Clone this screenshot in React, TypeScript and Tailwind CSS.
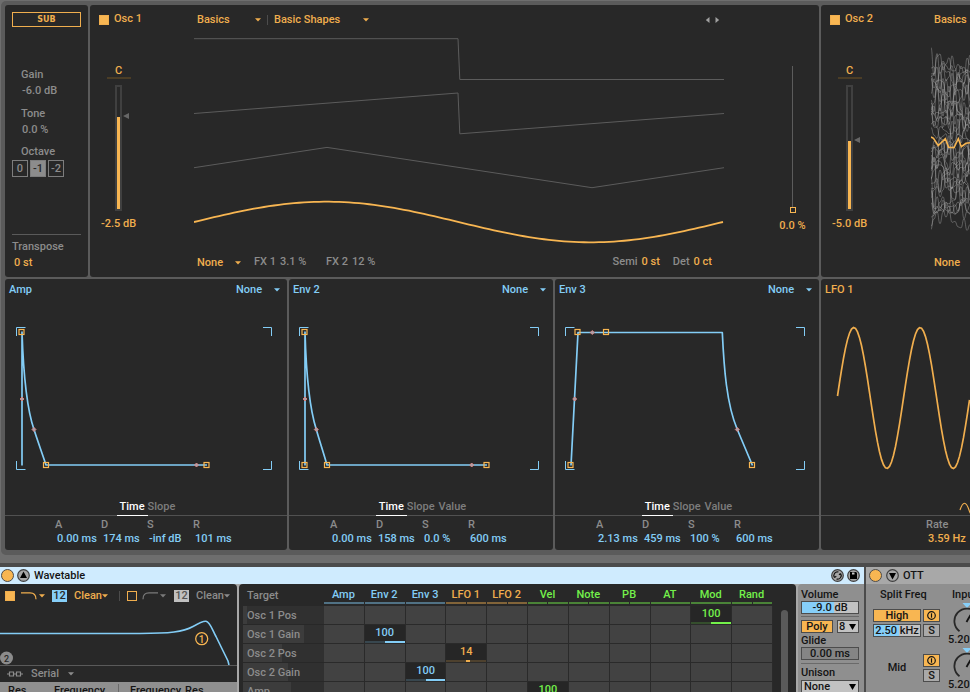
import { useState } from "react";
import type { ReactNode } from "react";
import clsx from "clsx";

type Tone = "amber" | "blue" | "gray" | "green" | "black";

const textTone: Record<Tone, string> = {
  amber: "text-[#f0ae4e]",
  blue: "text-[#83cdf6]",
  gray: "text-[#8c8c8c]",
  green: "text-[#74f14b]",
  black: "text-[#141414]",
};

function Caret({ className }: { className?: string }) {
  return (
    <svg viewBox="0 0 6 4" className={clsx("h-1 w-1.5 shrink-0 fill-current", className)}>
      <path d="M0 .3h6L3 3.6z" />
    </svg>
  );
}

type PickProps = {
  label: string;
  options: string[];
  tone: Tone;
  className?: string;
};

function Pick({ label, options, tone, className }: PickProps) {
  return (
    <div className={clsx("relative flex items-center", textTone[tone], className)}>
      <select aria-label={label} className="w-full appearance-none bg-transparent leading-4 outline-none">
        {options.map((o) => (
          <option key={o}>{o}</option>
        ))}
      </select>
      <Caret className="pointer-events-none absolute right-0" />
    </div>
  );
}

function Panel({ children, className }: { children: ReactNode; className?: string }) {
  return (
    <section className={clsx("min-w-0 overflow-hidden rounded-[3px] bg-[#282828]", className)}>
      {children}
    </section>
  );
}

function Toggle({ label, on = true }: { label: string; on?: boolean }) {
  return (
    <input
      type="checkbox"
      aria-label={label}
      defaultChecked={on}
      className="size-[10px] shrink-0 appearance-none border border-[#f0ae4e] checked:bg-[#f8b652]"
    />
  );
}

function SubPanel() {
  const [octave, setOctave] = useState("-1");

  return (
    <Panel className="flex w-[83px] shrink-0 flex-col px-[7px] pt-[7px] pb-1.5 text-[#8c8c8c]">
      <button
        type="button"
        className="h-[15px] border border-[#f0ae4e] font-['DejaVu_Sans',sans-serif] text-[8px] leading-3 font-bold text-[#f0ae4e]"
      >
        SUB
      </button>
      <dl className="mt-10 flex flex-col gap-[7px] pl-[9px] leading-4">
        <div>
          <dt>Gain</dt>
          <dd className="pl-px">-6.0 dB</dd>
        </div>
        <div>
          <dt>Tone</dt>
          <dd className="pl-px">0.0 %</dd>
        </div>
      </dl>
      <p className="mt-1.5 pl-[9px] leading-4">Octave</p>
      <div className="flex gap-0.5">
        {["0", "-1", "-2"].map((o) => (
          <button
            key={o}
            type="button"
            aria-pressed={o === octave}
            onClick={() => setOctave(o)}
            className={clsx(
              "h-[17px] w-4 border border-[#7d7d7d] text-center leading-[15px]",
              o === octave && "bg-[#8c8c8c] text-[#282828]",
            )}
          >
            {o}
          </button>
        ))}
      </div>
      <dl className="mt-auto border-t border-[#5a5a5a] pt-1 leading-4">
        <dt>Transpose</dt>
        <dd className="pl-0.5 text-[#f0ae4e]">0 st</dd>
      </dl>
    </Panel>
  );
}

type LevelProps = { label: string; text: string; initial: number };

function Level({ label, text, initial }: LevelProps) {
  const [value, setValue] = useState(initial);

  return (
    <div className="mt-[29px] flex w-[57px] flex-col items-center text-[#f0ae4e]">
      <span className="h-[17px] w-6 border-b-2 border-[#4b3d26] text-center leading-[17px]">C</span>
      <div className="relative mt-1.5">
        <input
          type="range"
          aria-label={label}
          value={value}
          onChange={(e) => setValue(Number(e.target.value))}
          style={{
            backgroundImage: `linear-gradient(to top, #f8b652 ${value}%, transparent ${value}%)`,
          }}
          className="block h-[126px] w-[7px] appearance-none border-2 border-[#404040] bg-origin-content bg-clip-content [direction:rtl] [writing-mode:vertical-lr] [&::-webkit-slider-thumb]:opacity-0"
        />
        <svg
          viewBox="0 0 6 6"
          style={{ bottom: `${value - 2}%` }}
          className="absolute left-2 size-1.5 fill-[#666666]"
        >
          <path d="M0 3l6-3v6z" />
        </svg>
      </div>
      <span className="mt-[5px] leading-4 whitespace-nowrap">{text}</span>
    </div>
  );
}

const sineWave = Array.from({ length: 107 }, (_, i) => {
  const x = Math.min(i * 5, 529);
  return `${x},${(189 - 20.3 * Math.sin((x / 529) * 2 * Math.PI)).toFixed(2)}`;
}).join(" ");

function BasicShapes() {
  return (
    <svg viewBox="0 0 530 214" className="w-full" fill="none" stroke="#5c5c5c">
      <path d="M0 5.7h264l1.8 40.8H530" />
      <path d="M0 80.5L264 60l1.8 40.8L530 80.5" />
      <path d="M0 134.7l133-20.3 265 40.3 132-20" />
      <polyline points={sineWave} stroke="#f8b652" strokeWidth="1.8" />
    </svg>
  );
}

// seeded so that the wavetable looks the same on every render
function makeNoise(count: number) {
  let seed = 7;
  const rand = () => {
    seed = (seed * 16807) % 2147483647;
    return seed / 2147483647 - 0.5;
  };
  return Array.from({ length: count }, (_, n) => {
    const mid = 30 + (n * 156) / (count - 1);
    let d = "";
    let px = 0;
    let py = mid;
    for (let x = 0; x <= 42; x += 3) {
      const y = mid + rand() * 31;
      d += x === 0 ? `M0 ${y.toFixed(1)}` : ` C${px + 1.5} ${py.toFixed(1)} ${x - 1.5} ${y.toFixed(1)} ${x} ${y.toFixed(1)}`;
      px = x;
      py = y;
    }
    return d;
  });
}

const noise = makeNoise(36);

function NoiseTable() {
  return (
    <svg viewBox="0 0 39 214" className="h-[214px] w-[39px]" fill="none">
      {noise.map((d, i) => (
        <path key={i} d={d} stroke="#b4b4b4" strokeOpacity=".5" strokeWidth=".8" />
      ))}
      <path
        d="M0 104l2.5 1.3 4.8 7.3 7-7 3.4 8.7 5.3.4 4.3-9 3 8 4.7-3.4 4-.6"
        stroke="#f8b652"
        strokeWidth="1.6"
      />
    </svg>
  );
}

function OscOne() {
  return (
    <Panel className="flex flex-1">
      <div className="w-[104px] shrink-0">
        <label className="flex h-7 items-center gap-[5px] pt-px pl-[9px] text-[#f0ae4e]">
          <Toggle label="Osc 1 on" />
          Osc 1
        </label>
        <Level label="Osc 1 gain" text="-2.5 dB" initial={75} />
      </div>
      <div className="min-w-0 flex-1">
        <div className="flex h-7 items-center pt-px pl-[3px]">
          <Pick label="Wavetable category" options={["Basics", "Complex"]} tone="amber" className="w-16" />
          <span className="mx-1.5 h-2.5 w-px bg-[#4c4c4c]" />
          <Pick label="Wavetable" options={["Basic Shapes", "Sines"]} tone="amber" className="w-[95px]" />
          <div className="ml-auto flex gap-[5px] pr-1">
            <button type="button" aria-label="Previous wavetable">
              <svg viewBox="0 0 5 6" className="h-1.5 w-[5px] fill-[#a0a0a0]">
                <path d="M4.500 0v6L.8 3z" />
              </svg>
            </button>
            <button type="button" aria-label="Next wavetable">
              <svg viewBox="0 0 5 6" className="h-1.5 w-[5px] fill-[#a0a0a0]">
                <path d="M.5 0v6L4.200 3z" />
              </svg>
            </button>
          </div>
        </div>
        <BasicShapes />
        <div className="flex h-[30px] items-center pt-px pl-[3px] text-[#8c8c8c]">
          <Pick label="Osc effect" options={["None", "FM", "Classic", "Modern"]} tone="amber" className="w-11" />
          <div className="ml-[13px] flex w-[72px] gap-1">
            <span>FX 1</span>
            <span>3.1 %</span>
          </div>
          <div className="flex gap-1">
            <span>FX 2</span>
            <span>12 %</span>
          </div>
          <div className="ml-auto flex gap-1">
            <span>Semi</span>
            <span className="text-[#f0ae4e]">0 st</span>
          </div>
          <div className="ml-[13px] flex gap-1 pr-3">
            <span>Det</span>
            <span className="text-[#f0ae4e]">0 ct</span>
          </div>
        </div>
      </div>
      <div className="flex w-[95px] shrink-0 flex-col items-center pt-[61px] pl-[42px] text-[#f0ae4e]">
        <input
          type="range"
          aria-label="Wavetable position"
          defaultValue={0}
          className="h-[147px] w-1.5 appearance-none bg-[linear-gradient(#5c5c5c,#5c5c5c)] bg-size-[1px_100%] bg-center bg-no-repeat [direction:rtl] [writing-mode:vertical-lr] [&::-webkit-slider-thumb]:size-1.5 [&::-webkit-slider-thumb]:appearance-none [&::-webkit-slider-thumb]:border [&::-webkit-slider-thumb]:border-[#f8b652] [&::-webkit-slider-thumb]:bg-[#282828]"
        />
        <span className="mt-[5px] leading-4">0.0 %</span>
      </div>
    </Panel>
  );
}

function OscTwo() {
  return (
    <Panel className="flex w-[149px] shrink-0 rounded-r-none">
      <div className="w-[110px] shrink-0">
        <label className="flex h-7 items-center gap-[5px] pt-px pl-[9px] text-[#f0ae4e]">
          <Toggle label="Osc 2 on" />
          Osc 2
        </label>
        <Level label="Osc 2 gain" text="-5.0 dB" initial={56} />
      </div>
      <div className="min-w-0 flex-1 overflow-hidden">
        <div className="flex h-7 items-center pt-px pl-[3px]">
          <Pick label="Osc 2 category" options={["Basics", "Complex"]} tone="amber" className="w-16 shrink-0" />
        </div>
        <NoiseTable />
        <div className="flex h-[30px] items-center pt-px pl-[3px]">
          <Pick label="Osc 2 effect" options={["None", "FM"]} tone="amber" className="w-11 shrink-0" />
        </div>
      </div>
    </Panel>
  );
}

type Point = [number, number];

type EnvProps = {
  name: string;
  width: number;
  frame: Point;
  path: string;
  squares: Point[];
  dots: Point[];
  tabs: string[];
  values: string[];
};

function Envelope({ name, width, frame, path, squares, dots, tabs, values }: EnvProps) {
  const [tab, setTab] = useState(tabs[0]);
  const [l, r] = frame;

  return (
    <Panel className="flex flex-col">
      <header className="flex h-[21px] items-center justify-between pt-px pr-[7px] pl-1 text-[#83cdf6]">
        <h2>{name}</h2>
        <Pick label={`${name} loop mode`} options={["None", "Trigger", "Loop"]} tone="blue" className="w-11" />
      </header>
      <svg viewBox={`0 0 ${width} 197`} className="w-full" fill="none">
        <path
          d={`M${l + 0.5} 36v-8.500h9M${r - 9} 27.500h8.500V36M${l + 0.5} 161v8.500h9M${r - 9} 169.500h8.500V161`}
          stroke="#83cdf6"
        />
        <path d={path} stroke="#83cdf6" strokeWidth="1.7" strokeLinejoin="round" />
        {squares.map(([x, y]) => (
          <rect key={`${x}-${y}`} x={x - 2.5} y={y - 2.5} width="5" height="5" stroke="#f8b652" strokeWidth="1.200" />
        ))}
        {dots.map(([x, y]) => (
          <path key={`${x}-${y}`} d={`M${x - 2} ${y}l2-2 2 2-2 2z`} fill="#a9a3ad" stroke="#e08580" strokeWidth=".9" />
        ))}
      </svg>
      <div className="flex h-[19px] justify-center border-b border-[#515151]" role="tablist">
        {tabs.map((t) => (
          <button
            key={t}
            type="button"
            role="tab"
            aria-selected={t === tab}
            onClick={() => setTab(t)}
            className={clsx(
              "h-[19px] leading-[19px]",
              t === tab
                ? "border-b border-white px-[3px] text-white"
                : "pr-1 text-[#7d7d7d] last:pr-0",
            )}
          >
            {t}
          </button>
        ))}
      </div>
      <dl className="mx-auto grid h-[34px] grid-cols-[repeat(4,46px)] pt-0.5 leading-[14px]">
        {["A", "D", "S", "R"].map((k, i) => (
          <div key={k} className="whitespace-nowrap">
            <dt className="pl-px text-[#8c8c8c]">{k}</dt>
            <dd className="pl-[3px] text-[#83cdf6]">{values[i]}</dd>
          </div>
        ))}
      </dl>
    </Panel>
  );
}

const envelopes: EnvProps[] = [
  {
    name: "Amp",
    width: 282,
    frame: [11, 267],
    path: "M17 165.500V32C18.200 68 20.500 105 29 129.500C32 139 37 153 41 165H202",
    squares: [[16.5, 32], [41, 165], [201.5, 165]],
    dots: [[17, 99], [29, 129.5], [191.5, 165]],
    tabs: ["Time", "Slope"],
    values: ["0.00 ms", "174 ms", "-inf dB", "101 ms"],
  },
  {
    name: "Env 2",
    width: 264,
    frame: [10, 250],
    path: "M16 165.500V32C17 68 19.500 105 27.300 129.500C30 139 34.500 153 38 165H198",
    squares: [[15.5, 32], [15.5, 165], [38, 165], [197.5, 165]],
    dots: [[16, 99], [27.3, 129.5], [182.7, 165]],
    tabs: ["Time", "Slope", "Value"],
    values: ["0.00 ms", "158 ms", "0.0 %", "600 ms"],
  },
  {
    name: "Env 3",
    width: 264,
    frame: [10, 250],
    path: "M16 165.500L23 32.500H167.300C169 68 171.500 104 182.300 129.500L197.500 165.500",
    squares: [[15.5, 165], [22.5, 32], [51, 32], [197, 165]],
    dots: [[19.7, 99], [37.300, 32.5], [182.3, 129.5]],
    tabs: ["Time", "Slope", "Value"],
    values: ["2.13 ms", "459 ms", "100 %", "600 ms"],
  },
];

const lfoWave = Array.from({ length: 67 }, (_, i) => {
  const x = 16.5 + i * 2;
  return `${x},${(98 - 70.5 * Math.sin(((x - 16.2) / 66.3) * 2 * Math.PI)).toFixed(2)}`;
}).join(" ");

function Lfo() {
  return (
    <Panel className="flex flex-col rounded-r-none text-[#f0ae4e]">
      <h2 className="h-[21px] pl-1 leading-[21px]">LFO 1</h2>
      <svg viewBox="0 0 149 215" className="w-full" fill="none" stroke="#f0ae4e">
        <polyline points={lfoWave} strokeWidth="1.7" />
        <path d="M139 210c3-9 6-9 9 0s3 0 3 0" strokeWidth="1.200" />
      </svg>
      <dl className="h-[35px] border-t border-[#515151] pt-0.5 pl-[105px] leading-[14px] whitespace-nowrap">
        <dt className="text-[#8c8c8c]">Rate</dt>
        <dd className="pl-0.5">3.59 Hz</dd>
      </dl>
    </Panel>
  );
}

function Power({ label }: { label: string }) {
  return (
    <button
      type="button"
      aria-label={label}
      className="size-[13px] shrink-0 rounded-full border border-[#4c4c4c] bg-[#f8b652]"
    />
  );
}

function RoundButton({ label, children }: { label: string; children: ReactNode }) {
  return (
    <button type="button" aria-label={label} className="shrink-0">
      <svg viewBox="0 0 13 13" className="size-[13px]">
        <circle cx="6.500" cy="6.500" r="5.800" fill="#a6a6a6" stroke="#3f3f3f" strokeWidth="1.200" />
        {children}
      </svg>
    </button>
  );
}

function Slope({ low }: { low?: boolean }) {
  return (
    <svg viewBox="0 0 16 8" className="h-2 w-4" fill="none" stroke="currentColor" strokeWidth="1.200">
      <path d={low ? "M0 .8h9c4 0 6 2 6 6.500" : "M16 .8H7C3 .8 1 2.800 1 7.300"} />
    </svg>
  );
}

function FilterPanel() {
  return (
    <div className="flex w-[237px] shrink-0 flex-col overflow-hidden rounded-tr-[4px] bg-[#282828]">
      <div className="flex h-[22px] shrink-0 items-center pt-px pl-[5px] text-[#f0ae4e]">
        <Toggle label="Filter 1 on" />
        <button type="button" aria-label="Filter 1 type" className="ml-1.5 flex items-center gap-0.5">
          <Slope low />
          <Caret />
        </button>
        <button type="button" className="ml-[7px] h-3 w-[15px] bg-[#86cff9] leading-3 text-[#282828]">
          12
        </button>
        <Pick label="Filter 1 circuit" options={["Clean", "OSR"]} tone="amber" className="ml-[7px] w-[34px]" />
        <span className="mr-[7px] ml-[11px] h-2.5 w-px bg-[#4c4c4c]" />
        <Toggle label="Filter 2 on" on={false} />
        <button type="button" aria-label="Filter 2 type" className="ml-[5px] flex items-center gap-0.5 text-[#7a7a7a]">
          <Slope />
          <Caret />
        </button>
        <button type="button" className="ml-2 h-3 w-[15px] bg-[#c0c0c0] leading-3 text-[#555555]">
          12
        </button>
        <Pick label="Filter 2 circuit" options={["Clean", "OSR"]} tone="gray" className="ml-[7px] w-[34px]" />
      </div>
      <svg viewBox="0 0 237 59" className="w-full shrink-0" fill="none">
        <path
          d="M0 27.500H140C170 27.500 183 26 193 20.500C200 16.500 203 15 206 15.300C210 16 212 23 216 30.500L228 55L229 59"
          stroke="#83cdf6"
          strokeWidth="1.600"
        />
        <circle cx="201.700" cy="32.700" r="6" stroke="#f8b652" strokeWidth="1.300" />
        <text x="201.700" y="36.500" textAnchor="middle" fontSize="10" fill="#f8b652">1</text>
        <circle cx="6.500" cy="52" r="6.500" fill="#8c8c8c" />
        <text x="6.500" y="55.500" textAnchor="middle" fontSize="9" fill="#282828">2</text>
      </svg>
      <div className="flex h-[17px] shrink-0 items-center border-t border-[#5a5a5a] pl-[7px] text-[#8c8c8c]">
        <svg viewBox="0 0 16 6" className="mr-2 h-1.5 w-4" fill="none" stroke="currentColor" strokeWidth="1.200">
          <path d="M0 3h2.500M6.500 3h3M13.500 3H16M2.500 1h4v4h-4zM9.500 1h4v4h-4z" />
        </svg>
        <Pick label="Filter routing" options={["Serial", "Parallel", "Split"]} tone="gray" className="w-[43px]" />
      </div>
      <div className="flex h-8 shrink-0 bg-[#8f8f8f] pt-0.5 pl-2 leading-[14px] text-[#141414]">
        <span className="w-[46px]">Res</span>
        <span className="w-16">Frequency</span>
        <span className="mr-[11px] w-px bg-[#6a6a6a]" />
        <span className="mr-1">Frequency</span>
        <span>Res</span>
      </div>
    </div>
  );
}

type Source = { name: string; tone: Tone; split?: boolean };

const sources: Source[] = [
  { name: "Amp", tone: "blue" },
  { name: "Env 2", tone: "blue" },
  { name: "Env 3", tone: "blue" },
  { name: "LFO 1", tone: "amber", split: true },
  { name: "LFO 2", tone: "amber", split: true },
  { name: "Vel", tone: "green", split: true },
  { name: "Note", tone: "green", split: true },
  { name: "PB", tone: "green", split: true },
  { name: "AT", tone: "green" },
  { name: "Mod", tone: "green" },
  { name: "Rand", tone: "green", split: true },
];

const targets = [
  { name: "Osc 1 Pos", fill: 0, amounts: { Mod: 100 } },
  { name: "Osc 1 Gain", fill: 75, amounts: { "Env 2": 100 } },
  { name: "Osc 2 Pos", fill: 48, amounts: { "LFO 1": 14 } },
  { name: "Osc 2 Gain", fill: 56, amounts: { "Env 3": 100 } },
  { name: "Amp", fill: 59, amounts: { Vel: 100 } },
] as { name: string; fill: number; amounts: Record<string, number> }[];

function ModMatrix() {
  return (
    <div className="flex min-w-0 flex-1 overflow-hidden rounded-t-[4px] bg-[#282828] pl-1">
      <div className="min-w-0 flex-1">
        <table className="w-full table-fixed border-separate border-spacing-0">
          <thead>
            <tr className="h-[22px]">
              <th scope="col" className="w-[81px] p-0 pt-0.5 pl-1 text-left font-medium text-[#8c8c8c]">
                Target
              </th>
              {sources.map((s) => (
                <th key={s.name} scope="col" className={clsx("p-0 font-medium", textTone[s.tone])}>
                  <div className="h-[18px] pr-0.5 leading-[21px]">{s.name}</div>
                  <div className="mr-px mb-0.5 flex h-0.5 gap-px opacity-45">
                    <i className="flex-1 bg-current" />
                    {s.split && <i className="flex-1 bg-current" />}
                  </div>
                </th>
              ))}
            </tr>
          </thead>
          <tbody>
            {targets.map((t) => (
              <tr key={t.name}>
                <th
                  scope="row"
                  className="border-b border-[#282828] bg-[#303030] p-0 text-left font-medium text-[#8c8c8c]"
                >
                  <div
                    className="h-[18px] bg-[#3c3c3c] pl-1 leading-[19px] whitespace-nowrap"
                    style={{ width: `${t.fill}%` }}
                  >
                    {t.name}
                  </div>
                </th>
                {sources.map((s) => {
                  const amount = t.amounts[s.name];
                  return (
                    <td
                      key={s.name}
                      className={clsx(
                        "border-r border-b border-[#2a2a2a] p-0 text-center",
                        textTone[s.tone],
                        amount ? "bg-[#262626]" : "bg-[#424242]",
                      )}
                    >
                      {amount && (
                        <div>
                          <div className="h-4 leading-4">{amount}</div>
                          <div className="flex h-0.5">
                            <i className="w-1/2 bg-current opacity-20" />
                            <i className="bg-current" style={{ width: `${Math.max(amount / 2, 8)}%` }} />
                            <i className="flex-1 bg-current opacity-20" />
                          </div>
                        </div>
                      )}
                    </td>
                  );
                })}
              </tr>
            ))}
          </tbody>
        </table>
      </div>
      <div className="w-[23px] shrink-0 pt-[26px] pl-2">
        <div className="h-full w-[7px] rounded-t-full bg-[#5a5a5a]" />
      </div>
    </div>
  );
}

function GlobalPanel() {
  return (
    <div className="flex w-[66px] shrink-0 flex-col rounded-tl-[4px] bg-[#8f8f8f] pt-[3px] pr-[5px] pl-[3px] leading-[14px] text-[#141414]">
      <label htmlFor="volume" className="h-3.5 leading-4">
        Volume
      </label>
      <input
        id="volume"
        defaultValue="-9.0 dB"
        className="h-[13px] w-full border border-[#4c4c4c] bg-[linear-gradient(to_right,#86cff9_58%,#c2c2c2_58%)] text-center leading-3"
      />
      <hr className="mt-0.5 border-[#6a6a6a]" />
      <div className="mt-[3px] flex justify-between">
        <button type="button" className="h-[13px] w-8 border border-[#4c4c4c] bg-[#f8b652] leading-[11px]">
          Poly
        </button>
        <div className="relative flex h-[13px] w-[22px] items-center border border-[#4c4c4c] bg-[#c2c2c2]">
          <select aria-label="Voices" className="w-full appearance-none pl-px leading-[11px] outline-none">
            <option>8</option>
            <option>4</option>
          </select>
          <svg viewBox="0 0 7 6" className="pointer-events-none absolute right-0.5 h-1.5 w-[7px]">
            <path d="M0 0h7L3.500 6z" />
          </svg>
        </div>
      </div>
      <label htmlFor="glide" className="h-3.5 leading-4">
        Glide
      </label>
      <input
        id="glide"
        defaultValue="0.00 ms"
        className="h-[13px] w-full border border-[#4c4c4c] bg-[#858585] text-center leading-3"
      />
      <hr className="mt-[3px] border-[#6a6a6a]" />
      <label htmlFor="unison" className="mt-0.5">
        Unison
      </label>
      <div className="relative flex h-[13px] items-center border border-[#4c4c4c] bg-[#c2c2c2]">
        <select id="unison" className="w-full appearance-none pl-0.5 leading-[11px] outline-none">
          <option>None</option>
          <option>Classic</option>
        </select>
        <svg viewBox="0 0 7 6" className="pointer-events-none absolute right-0.5 h-1.5 w-[7px]">
          <path d="M0 0h7L3.500 6z" />
        </svg>
      </div>
    </div>
  );
}

function Wavetable() {
  return (
    <article className="flex min-w-0 flex-1 flex-col">
      <header className="flex h-[17px] shrink-0 items-center gap-[3px] bg-[#cfebfe] pr-1 pl-px text-[#141414]">
        <Power label="Wavetable on" />
        <RoundButton label="Fold">
          <path d="M6.500 2.500L10 9H3z" />
        </RoundButton>
        <h2 className="flex-1 pl-px leading-[18px]">Wavetable</h2>
        <RoundButton label="Hot-swap preset">
          <path
            d="M3.500 8.500A3.600 3.600 0 0 1 7.500 3M9.600 4.600A3.600 3.600 0 0 1 5.500 10M3.500 8.500L2.500 6.300M3.500 8.500l1.800-1.200M9.600 4.600l.8 2.200M9.600 4.600L8 5.800"
            fill="none"
            stroke="#141414"
            strokeWidth="1.200"
          />
        </RoundButton>
        <RoundButton label="Save preset">
          <path d="M3 3h6l1 1v6H3z" />
          <path d="M5 3.500h2.500v2H5z" fill="#c8c8c8" />
        </RoundButton>
      </header>
      <div className="flex min-h-0 flex-1 gap-0.5 bg-[#a8a8a8]">
        <FilterPanel />
        <ModMatrix />
        <GlobalPanel />
      </div>
    </article>
  );
}

function SoloButton({ label }: { label: string }) {
  return (
    <button
      type="button"
      aria-label={label}
      className="h-[13px] w-[17px] border border-[#4c4c4c] bg-[#a9a9a9] leading-[11px]"
    >
      S
    </button>
  );
}

function BandPower({ label }: { label: string }) {
  return (
    <button
      type="button"
      aria-label={label}
      className="flex h-[13px] w-[17px] items-center justify-center border border-[#4c4c4c] bg-[#f8b652]"
    >
      <svg viewBox="0 0 9 9" className="size-[9px]" fill="none" stroke="#141414" strokeWidth="1.200">
        <circle cx="4.500" cy="4.500" r="3.800" />
        <path d="M4.500 2.300v4.400" />
      </svg>
    </button>
  );
}

function Knob() {
  return (
    <div className="flex h-[45px] flex-col">
      <svg viewBox="0 0 38 31" className="h-[31px] w-[38px]" fill="none">
        <path d="M14.500 0h9L19 5z" fill="#86cff9" />
        <path d="M11.500 28.300A12.600 12.600 0 1 1 26.500 28.300" stroke="#282828" strokeWidth="1.800" />
        <path d="M18.500 19l4-7" stroke="#141414" strokeWidth="1.800" />
      </svg>
      <span className="leading-[11px]">5.20</span>
    </div>
  );
}

function Ott() {
  return (
    <article className="flex w-[104px] shrink-0 flex-col overflow-hidden text-[#141414]">
      <header className="flex h-[17px] shrink-0 items-center gap-1 bg-[#a8a8a8] pl-[3px]">
        <Power label="OTT on" />
        <RoundButton label="Unfold">
          <path d="M6.500 10.500L3 4h7z" />
        </RoundButton>
        <h2 className="leading-[18px]">OTT</h2>
      </header>
      <div className="flex min-h-0 flex-1 bg-[#8f8f8f] pl-[7px]">
        <div className="w-[75px] shrink-0 pt-[3px]">
          <p className="h-3.5 pl-[7px] leading-4">Split Freq</p>
          <div className="mt-2 grid grid-cols-[48px_17px] gap-x-0.5 gap-y-0.5">
            <button type="button" className="h-[13px] border border-[#4c4c4c] bg-[#f8b652] leading-[11px]">
              High
            </button>
            <BandPower label="High band on" />
            <input
              aria-label="High split frequency"
              defaultValue="2.50 kHz"
              className="h-[13px] w-full border border-[#4c4c4c] bg-[linear-gradient(to_right,#86cff9_55%,#c2c2c2_55%)] text-center leading-[11px]"
            />
            <SoloButton label="Solo high" />
          </div>
          <div className="mt-[17px] grid grid-cols-[48px_17px] items-center gap-x-0.5">
            <span className="text-center">Mid</span>
            <div className="flex flex-col gap-0.5">
              <BandPower label="Mid band on" />
              <SoloButton label="Solo mid" />
            </div>
          </div>
        </div>
        <div className="shrink-0 pt-[3px]">
          <p className="h-3.5 pl-1 leading-4">Input</p>
          <div className="pt-0.5">
            <Knob />
            <Knob />
          </div>
        </div>
      </div>
    </article>
  );
}

export default function App() {
  return (
    <main className="flex h-screen flex-col overflow-hidden bg-[#6e6e6e] pt-px font-[Roboto,sans-serif] text-[11px] font-medium">
      <div className="ml-px flex shrink-0 flex-col gap-0.5 rounded-l-[5px] bg-[#5b5b5b] pt-1 pb-[5px] pl-1">
        <div className="flex gap-0.5">
          <SubPanel />
          <OscOne />
          <OscTwo />
        </div>
        <div className="grid grid-cols-[282fr_264fr_264fr_149px] gap-0.5">
          {envelopes.map((e) => (
            <Envelope key={e.name} {...e} />
          ))}
          <Lfo />
        </div>
      </div>
      <div className="mt-2 flex min-h-0 flex-1 gap-0.5 bg-[#4b4b4b] pt-1">
        <Wavetable />
        <Ott />
      </div>
    </main>
  );
}
